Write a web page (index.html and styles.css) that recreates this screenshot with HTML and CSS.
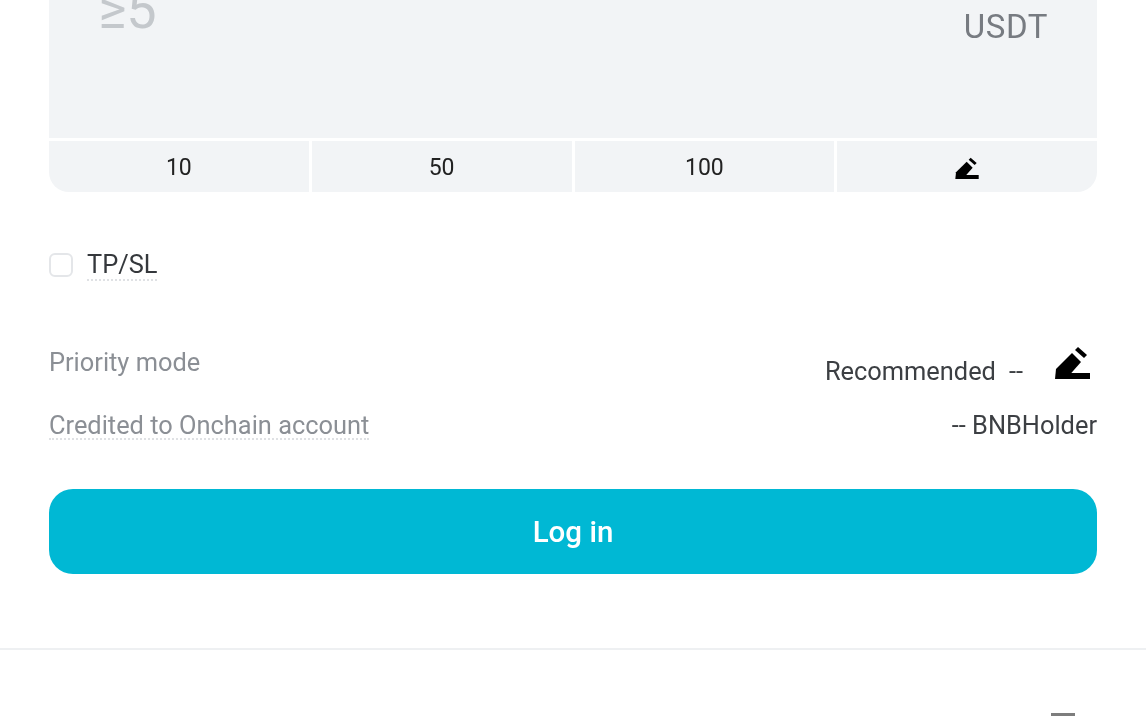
FILE: index.html
```html
<!DOCTYPE html>
<html lang="en">
<head>
    <meta charset="UTF-8">
    <meta name="viewport" content="width=device-width, initial-scale=1.0">
    <title>Order form</title>
    <link rel="stylesheet" href="styles.css">
</head>
<body>
    <main class="order-form">
        <section class="amount-panel">
            <div class="amount-input">
                <span class="amount-placeholder">≥5</span>
                <span class="amount-unit">USDT</span>
            </div>
            <div class="amount-presets">
                <button type="button">10</button>
                <button type="button">50</button>
                <button type="button">100</button>
                <button type="button" aria-label="Edit">
                    <svg class="pen pen-small" viewBox="0 0 35 33"><path d="M0 33 1 23 17 7 26 16 11 33Z"/><path d="M20 4 23 1 32 9 29 12Z"/><path d="M12 27H35V33H9Z"/></svg>
                </button>
            </div>
        </section>

        <label class="tpsl">
            <span class="checkbox"></span>
            <span class="dotted">TP/SL</span>
        </label>

        <div class="info-row info-priority">
            <span class="info-label">Priority mode</span>
            <span class="info-value">
                <span class="priority-text">Recommended</span>
                <span class="priority-dash">--</span>
                <svg class="pen" viewBox="0 0 35 33"><path d="M0 33 1 23 17 7 26 16 11 33Z"/><path d="M20 4 23 1 32 9 29 12Z"/><path d="M12 27H35V33H9Z"/></svg>
            </span>
        </div>
        <div class="info-row info-credited">
            <span class="info-label dotted">Credited to Onchain account</span>
            <span class="info-value">-- BNBHolder</span>
        </div>

        <button type="button" class="login-btn">Log in</button>
    </main>

    <footer class="bottom-bar">
        <span class="bottom-icon"></span>
    </footer>
</body>
</html>
```

FILE: styles.css
```css
html, body {
    height: 100%;
}

body {
    margin: 0;
    height: 716px;
    overflow: hidden;
    background-color: #fff;
    font-family: Roboto, "Liberation Sans", sans-serif;
    filter: blur(0.7px);
}

.order-form {
    padding: 0 49px;
    height: 648px;
    box-sizing: border-box;
}

.amount-panel {
    height: 192px;
    border-radius: 0 0 20px 20px;
    overflow: hidden;
}

.amount-input {
    height: 138px;
    box-sizing: border-box;
    padding: 0 49px 0 49px;
    background-color: #f2f4f6;
    display: flex;
    justify-content: space-between;
    overflow: hidden;
}

.amount-placeholder {
    margin-top: -18px;
    font-size: 54px;
    line-height: 56px;
    height: 56px;
    color: #c4c8cc;
}

.amount-unit {
    margin-top: 9px;
    font-size: 33px;
    letter-spacing: 0.6px;
    line-height: 36px;
    height: 36px;
    color: #777b81;
}

.amount-presets {
    display: grid;
    grid-template-columns: repeat(4, 1fr);
    gap: 3px;
    margin-top: 3px;
    height: 51px;
}

.amount-presets button {
    border: none;
    padding: 2px 0 0;
    background-color: #f2f4f6;
    font-family: inherit;
    font-size: 23px;
    color: #222;
}

.tpsl {
    display: flex;
    align-items: center;
    gap: 14px;
    margin-top: 61px;
    height: 24px;
    font-size: 25.4px;
    color: #35383c;
}

.checkbox {
    width: 24px;
    height: 24px;
    box-sizing: border-box;
    border: 2px solid #e4e6e9;
    border-radius: 6px;
}

.dotted {
    border-bottom: 2px dotted #dfe1e4;
    line-height: 30px;
}

.info-row {
    display: flex;
    justify-content: space-between;
    font-size: 25.4px;
}

.info-priority {
    margin-top: 68px;
    height: 36px;
    align-items: flex-start;
}

.info-credited {
    margin-top: 30px;
    height: 29px;
    line-height: 28px;
}

.info-credited .dotted {
    line-height: 28px;
}

.info-label {
    color: #8b8f95;
}

.info-priority .info-label {
    line-height: 34px;
}

.info-value {
    color: #3c3f43;
}

.info-priority .info-value {
    display: flex;
    align-items: flex-start;
    margin-top: 1px;
    padding-right: 7px;
}

.priority-text {
    margin-top: 10px;
    line-height: 30px;
}

.priority-dash {
    margin: 10px 32px 0 13px;
    line-height: 30px;
}

.pen {
    display: block;
    width: 35px;
    height: 33px;
    fill: #000;
}

.pen-small {
    width: 24px;
    height: 22px;
    margin: 0 auto;
}

.login-btn {
    display: block;
    width: 100%;
    height: 85px;
    margin-top: 49px;
    border: none;
    border-radius: 24px;
    background-color: #00b8d4;
    color: #fff;
    font-family: inherit;
    font-size: 29.5px;
    font-weight: 500;
}

.bottom-bar {
    border-top: 2px solid #eef0f2;
    height: 66px;
    padding-right: 71px;
    display: flex;
    justify-content: flex-end;
    align-items: flex-end;
}

.bottom-icon {
    width: 24px;
    height: 3px;
    background-color: #7d7d7d;
}
```
